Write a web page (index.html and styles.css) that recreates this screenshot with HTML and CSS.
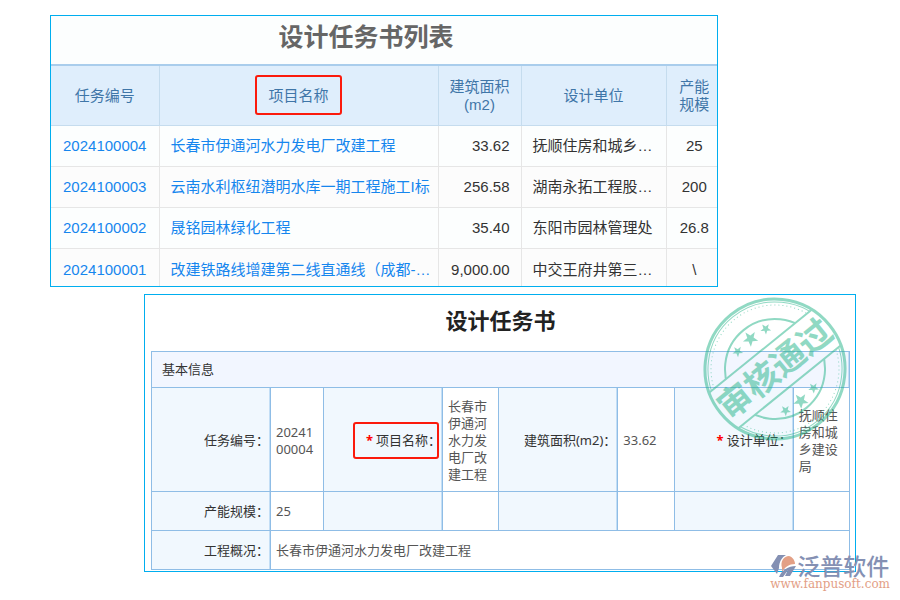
FILE: index.html
```
<!DOCTYPE html>
<html lang="zh-CN">

<head>
    <meta charset="UTF-8">
    <meta name="viewport" content="width=device-width, initial-scale=1.0">
    <title>设计任务书</title>
    <link rel="stylesheet" href="styles.css">
</head>

<body>
    <section class="panel list-panel">
        <h1>设计任务书列表</h1>
        <table class="list">
            <colgroup>
                <col class="col-id">
                <col>
                <col class="col-area">
                <col class="col-unit">
                <col class="col-scale">
            </colgroup>
            <thead>
                <tr>
                    <th>任务编号</th>
                    <th><span class="marked">项目名称</span></th>
                    <th>建筑面积<br>(m2)</th>
                    <th>设计单位</th>
                    <th class="scale">产能<br>规模</th>
                </tr>
            </thead>
            <tbody>
                <tr>
                    <td class="center"><a href="#">2024100004</a></td>
                    <td><a href="#">长春市伊通河水力发电厂改建工程</a></td>
                    <td class="num">33.62</td>
                    <td>抚顺住房和城乡…</td>
                    <td class="center scale">25</td>
                </tr>
                <tr>
                    <td class="center"><a href="#">2024100003</a></td>
                    <td><a href="#">云南水利枢纽潜明水库一期工程施工I标</a></td>
                    <td class="num">256.58</td>
                    <td>湖南永拓工程股…</td>
                    <td class="center scale">200</td>
                </tr>
                <tr>
                    <td class="center"><a href="#">2024100002</a></td>
                    <td><a href="#">晟铭园林绿化工程</a></td>
                    <td class="num">35.40</td>
                    <td>东阳市园林管理处</td>
                    <td class="center scale">26.8</td>
                </tr>
                <tr>
                    <td class="center"><a href="#">2024100001</a></td>
                    <td><a href="#">改建铁路线增建第二线直通线（成都-…</a></td>
                    <td class="num">9,000.00</td>
                    <td>中交王府井第三…</td>
                    <td class="center scale">\</td>
                </tr>
            </tbody>
        </table>
    </section>

    <section class="panel detail-panel">
        <h2>设计任务书</h2>
        <table class="detail">
            <colgroup>
                <col class="col-label">
                <col class="col-first">
                <col class="col-label">
                <col>
                <col class="col-label">
                <col>
                <col class="col-label">
                <col>
            </colgroup>
            <tbody>
                <tr>
                    <th class="group" colspan="8" scope="colgroup">基本信息</th>
                </tr>
                <tr class="tall">
                    <th scope="row">任务编号：</th>
                    <td>2024100004</td>
                    <th scope="row"><span class="marked required">项目名称：</span></th>
                    <td>长春市伊通河水力发电厂改建工程</td>
                    <th scope="row">建筑面积(m2)：</th>
                    <td>33.62</td>
                    <th scope="row"><span class="required">设计单位：</span></th>
                    <td>抚顺住房和城乡建设局</td>
                </tr>
                <tr>
                    <th scope="row">产能规模：</th>
                    <td>25</td>
                    <th></th>
                    <td></td>
                    <th></th>
                    <td></td>
                    <th></th>
                    <td></td>
                </tr>
                <tr>
                    <th scope="row">工程概况：</th>
                    <td colspan="7">长春市伊通河水力发电厂改建工程</td>
                </tr>
            </tbody>
        </table>

        <svg class="stamp" viewBox="-74 -74 148 148" role="img" aria-label="审核通过">
            <defs>
                <path id="star" d="M0-8 2-2.6 7.6-2.5 3.2 1 4.7 6.5 0 3.3-4.7 6.5-3.2 1-7.6-2.5-2-2.6Z" />
                <clipPath id="outside">
                    <path d="M-80-80H80V-23H-80ZM-80 23H80V80H-80Z" />
                </clipPath>
            </defs>
            <g transform="rotate(-39)">
                <circle r="70" class="ring" stroke-width="3" />
                <g clip-path="url(#outside)">
                    <circle r="67" class="ring" stroke-width="1" />
                    <circle r="64" class="ring" stroke-width="1" stroke-dasharray="1 3" />
                    <circle r="50" class="ring" stroke-width="2" />
                </g>
                <path class="ring" stroke-width="2" d="M-67-23H67M-67 23H67" />
                <text y="12" text-anchor="middle">审核通过</text>
                <use href="#star" y="-39" />
                <use href="#star" transform="translate(-18 -37) scale(.7)" />
                <use href="#star" transform="translate(18 -37) scale(.7)" />
                <use href="#star" y="41" />
                <use href="#star" transform="translate(-18 39) scale(.7)" />
                <use href="#star" transform="translate(18 39) scale(.7)" />
            </g>
        </svg>

        <div class="brand">
            <div class="brand-name">
                <svg viewBox="0 0 26 24" aria-hidden="true">
                    <path fill="#8490b3" d="M7 1H15C11 3 8 8 8 14L6 20 0 12Z" />
                    <path fill="#e3a086" d="M11 14C9 7 13 2 18 2 22 3 24 7 24 10 18 10 14 13 11 18Z" />
                    <path fill="#8490b3" d="M8 23C11 16 17 12 25 12L19 22H14L17 16 12 23Z" />
                </svg>
                <span>泛普软件</span>
            </div>
            <div class="brand-url">www.fanpusoft.com</div>
        </div>
    </section>
</body>

</html>
```

FILE: styles.css
```
* {
    box-sizing: border-box;
}

body {
    margin: 0;
    padding: 15px 44px 28px 50px;
    background: #fff;
    font-family: "Liberation Sans", "Noto Sans CJK SC", sans-serif;
}

h1,
h2 {
    margin: 0;
    text-align: center;
}

table {
    width: 100%;
    table-layout: fixed;
    border-collapse: collapse;
}

.panel {
    border: 1px solid #00aeef;
}

/* task list */
.list-panel {
    margin-right: 138px;
    background: #fcfefe;
    font-size: 15px;
    line-height: 18px;
}

.list-panel h1 {
    padding: 3px 36px 9px 0;
    font-size: 25px;
    line-height: 36px;
    color: #666;
}

.col-id {
    width: 108px;
}

.col-area {
    width: 83px;
}

.col-unit {
    width: 145px;
}

.col-scale {
    width: 51px;
}

.list th {
    height: 60px;
    padding: 2px 0 0;
    background: #dfeefc;
    border-top: 2px solid #a9cdec;
    border-bottom: 1px solid #c5dcee;
    font-weight: normal;
    color: #3f76a8;
}

.list th + th {
    border-left: 1px solid #c5dcee;
}

.list td {
    height: 41px;
    padding: 1px 0 0 11px;
    border-bottom: 1px solid #e6e6e6;
    white-space: nowrap;
    color: #333;
}

.list td + td {
    border-left: 1px solid #e6e6e6;
}

.list tbody tr:nth-child(even) {
    background: #fcfcfc;
}

.list tr:last-child td {
    height: 38px;
    padding-top: 5px;
    border-bottom: 0;
}

.list .center {
    padding-left: 0;
    padding-right: 0;
    text-align: center;
}

.list .scale {
    padding-left: 5px;
}

.list .num {
    padding-right: 11px;
    text-align: right;
}

.list a {
    color: #1686ee;
    text-decoration: none;
}

/* red frame round the highlighted field */
.marked {
    position: relative;
}

.marked::after {
    content: "";
    position: absolute;
    inset: -12px -13px -11px;
    border: 2px solid #fb1a0c;
    border-radius: 3px;
}

/* task detail */
.detail-panel {
    position: relative;
    margin: 7px 0 0 94px;
    padding: 0 5px 1px 6px;
    font-family: "Noto Sans", "Noto Sans CJK SC", sans-serif;
    font-size: 13px;
    line-height: 17px;
}

.detail-panel h2 {
    padding: 9px 0 15px;
    font-size: 22px;
    line-height: 32px;
    color: #222;
}

.col-label {
    width: 119px;
}

.col-first {
    width: 53px;
}

.detail th,
.detail td {
    height: 39px;
    padding: 0 5px;
    border: 1px solid #8fbde6;
    text-align: left;
    font-weight: normal;
    color: #555;
    word-break: break-all;
}

.detail th {
    padding: 0 1px;
    background: #f1f8fe;
    box-shadow: inset -1px 0 #c3def5;
    text-align: right;
    color: #333;
}

.detail .group {
    height: 36px;
    padding: 0 10px;
    background: #f2f6ff;
    text-align: left;
}

.detail .tall th,
.detail .tall td {
    height: 104px;
    padding-top: 2px;
}

.required::before {
    content: "*";
    margin-right: 3px;
    font-weight: bold;
    color: #f00;
}

.detail .marked::after {
    inset: -9px 2px -10px -13px;
}

.stamp {
    position: absolute;
    top: 0;
    right: 6px;
    width: 148px;
    height: 148px;
    opacity: .5;
    fill: #24b488;
}

.stamp text {
    font-family: "Noto Sans CJK SC", sans-serif;
    font-size: 34px;
    font-weight: bold;
}

.ring {
    fill: none;
    stroke: #24b488;
}

.brand {
    position: absolute;
    right: -35px;
    bottom: -20px;
    color: #8490b3;
}

.brand-name {
    display: flex;
    align-items: center;
    justify-content: center;
    height: 22px;
    font-size: 23px;
    font-weight: 500;
    line-height: 22px;
}

.brand-name svg {
    width: 26px;
    height: 24px;
}

.brand-url {
    font-family: "DejaVu Serif", serif;
    font-size: 12px;
    line-height: 14px;
    text-align: center;
    color: #e3a086;
}
```
